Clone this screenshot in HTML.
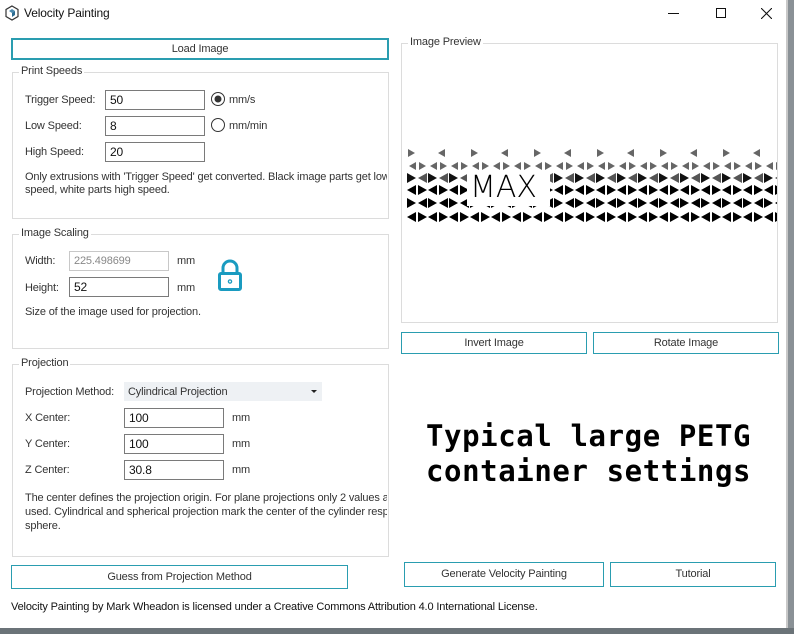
<!DOCTYPE html>
<html><head><meta charset="utf-8"><style>
*{box-sizing:border-box;margin:0;padding:0}
body{width:794px;height:634px;overflow:hidden;background:#fff;font-family:"Liberation Sans",sans-serif;font-size:11px;letter-spacing:-0.15px;color:#222;position:relative}
.a{position:absolute}
.btn{position:absolute;border:1px solid #2a9db0;background:#fff;text-align:center;font-size:11px;color:#333}
.grp{position:absolute;border:1px solid #dcdcdc}
.grp>.t{position:absolute;top:-8px;left:6px;background:#fff;padding:0 2px;color:#333}
.in{position:absolute;border:1px solid #7a7a7a;height:20px;padding:1px 4px;font-size:12px;color:#111;line-height:16px}
.lbl{position:absolute;color:#333}
</style></head><body>
<div class="a" style="left:788px;top:0;width:6px;height:634px;background:#8a9196"></div>
<div class="a" style="left:0;top:628px;width:794px;height:6px;background:#6b7378"></div>
<div class="a" style="left:786px;top:0;width:2px;height:628px;background:#c8c8c8"></div>
<svg class="a" style="left:4px;top:5px" width="16" height="16" viewBox="0 0 16 16"><polygon points="8,1 14,4.5 14,11.5 8,15 2,11.5 2,4.5" fill="#fff" stroke="#333" stroke-width="1.2"/><polygon points="8,4 11,6 8,8 5,6" fill="#4a8ab0"/><polygon points="8,8 11,6 11,10 8,12" fill="#2a6a90"/></svg>
<div class="a" style="left:24px;top:6px;font-size:12px;color:#111">Velocity Painting</div>
<div class="a" style="left:668px;top:13px;width:11px;height:1px;background:#111"></div>
<div class="a" style="left:716px;top:8px;width:10px;height:10px;border:1px solid #111"></div>
<svg class="a" style="left:761px;top:8px" width="11" height="11"><path d="M0 0L11 11M11 0L0 11" stroke="#111" stroke-width="1.1"/></svg>

<div class="btn" style="left:11px;top:38px;width:378px;height:22px;border-width:2px;line-height:18px">Load Image</div>

<div class="grp" style="left:12px;top:72px;width:377px;height:147px"><span class="t">Print Speeds</span></div>
<div class="lbl" style="left:25px;top:94px">Trigger Speed:</div>
<div class="in" style="left:105px;top:90px;width:100px">50</div>
<svg class="a" style="left:210px;top:91px" width="16" height="16"><circle cx="8" cy="8" r="6.5" fill="#fff" stroke="#333"/><circle cx="8" cy="8" r="3.5" fill="#333"/></svg>
<div class="lbl" style="left:229px;top:94px">mm/s</div>
<div class="lbl" style="left:25px;top:120px">Low Speed:</div>
<div class="in" style="left:105px;top:116px;width:100px">8</div>
<svg class="a" style="left:210px;top:117px" width="16" height="16"><circle cx="8" cy="8" r="6.5" fill="#fff" stroke="#333"/></svg>
<div class="lbl" style="left:229px;top:120px">mm/min</div>
<div class="lbl" style="left:25px;top:146px">High Speed:</div>
<div class="in" style="left:105px;top:142px;width:100px">20</div>
<div class="lbl" style="left:25px;top:171px;width:362px;line-height:13px;white-space:nowrap;overflow:hidden">Only extrusions with 'Trigger Speed' get converted. Black image parts get low<br>speed, white parts high speed.</div>

<div class="grp" style="left:12px;top:234px;width:377px;height:115px"><span class="t">Image Scaling</span></div>
<div class="lbl" style="left:25px;top:255px">Width:</div>
<div class="in" style="left:69px;top:251px;width:100px;border-color:#c8c8c8;color:#888;font-size:11px">225.498699</div>
<div class="lbl" style="left:177px;top:255px">mm</div>
<div class="lbl" style="left:25px;top:282px">Height:</div>
<div class="in" style="left:69px;top:277px;width:100px">52</div>
<div class="lbl" style="left:177px;top:282px">mm</div>
<svg class="a" style="left:217px;top:259px" width="26" height="33" viewBox="0 0 26 33"><path d="M6 15V9a7 7 0 0 1 14 0v6" fill="none" stroke="#1a9bc0" stroke-width="3"/><rect x="2.5" y="14.5" width="21" height="16" rx="1.5" fill="none" stroke="#1a9bc0" stroke-width="3"/><circle cx="13" cy="22.5" r="1.6" fill="none" stroke="#1a9bc0" stroke-width="1.3"/></svg>
<div class="lbl" style="left:25px;top:306px">Size of the image used for projection.</div>

<div class="grp" style="left:12px;top:364px;width:377px;height:193px"><span class="t">Projection</span></div>
<div class="lbl" style="left:25px;top:386px">Projection Method:</div>
<div class="a" style="left:124px;top:382px;width:198px;height:19px;background:#eef1f4"></div>
<div class="lbl" style="left:128px;top:386px">Cylindrical Projection</div>
<svg class="a" style="left:311px;top:390px" width="6" height="4"><path d="M0 0H6L3 3Z" fill="#222"/></svg>
<div class="lbl" style="left:25px;top:412px">X Center:</div>
<div class="in" style="left:124px;top:408px;width:100px">100</div>
<div class="lbl" style="left:232px;top:412px">mm</div>
<div class="lbl" style="left:25px;top:438px">Y Center:</div>
<div class="in" style="left:124px;top:434px;width:100px">100</div>
<div class="lbl" style="left:232px;top:438px">mm</div>
<div class="lbl" style="left:25px;top:464px">Z Center:</div>
<div class="in" style="left:124px;top:460px;width:100px">30.8</div>
<div class="lbl" style="left:232px;top:464px">mm</div>
<div class="lbl" style="left:25px;top:491px;width:362px;line-height:14px;white-space:nowrap;overflow:hidden">The center defines the projection origin. For plane projections only 2 values a<br>used. Cylindrical and spherical projection mark the center of the cylinder resp<br>sphere.</div>

<div class="btn" style="left:11px;top:565px;width:337px;height:24px;line-height:22px">Guess from Projection Method</div>
<div class="lbl" style="left:11px;top:601px;color:#111">Velocity Painting by Mark Wheadon is licensed under a Creative Commons Attribution 4.0 International License.</div>

<div class="grp" style="left:401px;top:43px;width:377px;height:280px"><span class="t">Image Preview</span></div>
<svg class="a" style="left:407px;top:147px" width="370" height="78">
<defs>
<pattern id="pa" width="21" height="13" patternUnits="userSpaceOnUse"><path d="M0 1L9 6L0 11Z M20 1L11 6L20 11Z" fill="#000"/></pattern>
<pattern id="pb" width="21" height="13" patternUnits="userSpaceOnUse"><path d="M9 1L0 6L9 11Z M11 1L20 6L11 11Z" fill="#000"/></pattern>
<pattern id="pga" width="21" height="13" patternUnits="userSpaceOnUse"><path d="M9 2L2 6L9 10Z M12 2L19 6L12 10Z" fill="#666"/></pattern>
<pattern id="pgs" width="63" height="13" patternUnits="userSpaceOnUse"><path d="M1 2L8 6L1 10Z M38 2L31 6L38 10Z" fill="#666"/></pattern>
<pattern id="pgb" width="21" height="13" patternUnits="userSpaceOnUse"><path d="M0 1L9 6L0 11Z" fill="#111"/><path d="M20 1L11 6L20 11Z" fill="#555"/></pattern>
</defs>
<rect x="0" y="0" width="370" height="13" fill="url(#pgs)"/>
<rect x="0" y="12" width="370" height="13" fill="url(#pga)" transform="translate(0,0)"/>
<rect x="0" y="0" width="370" height="13" fill="url(#pgb)" transform="translate(0,25)"/>
<rect x="0" y="0" width="370" height="13" fill="url(#pb)" transform="translate(0,37)"/>
<rect x="0" y="0" width="370" height="13" fill="url(#pa)" transform="translate(0,50)"/>
<rect x="0" y="0" width="370" height="13" fill="url(#pb)" transform="translate(0,64)"/>
<rect x="60" y="23" width="83" height="36" fill="#fff"/>
</svg>
<div class="a" style="left:470px;top:172px;font-family:'DejaVu Sans',sans-serif;font-size:30px;font-weight:300;color:#000;line-height:32px;letter-spacing:0">MAX</div>

<div class="btn" style="left:401px;top:332px;width:186px;height:22px;line-height:20px">Invert Image</div>
<div class="btn" style="left:593px;top:332px;width:186px;height:22px;line-height:20px">Rotate Image</div>

<div class="a" style="left:426px;top:419px;font-family:'DejaVu Sans Mono',monospace;font-weight:bold;font-size:29px;line-height:35px;letter-spacing:0.6px;color:#000;white-space:pre">Typical large PETG
container settings</div>

<div class="btn" style="left:404px;top:562px;width:200px;height:25px;line-height:23px">Generate Velocity Painting</div>
<div class="btn" style="left:610px;top:562px;width:166px;height:25px;line-height:23px">Tutorial</div>
</body></html>
